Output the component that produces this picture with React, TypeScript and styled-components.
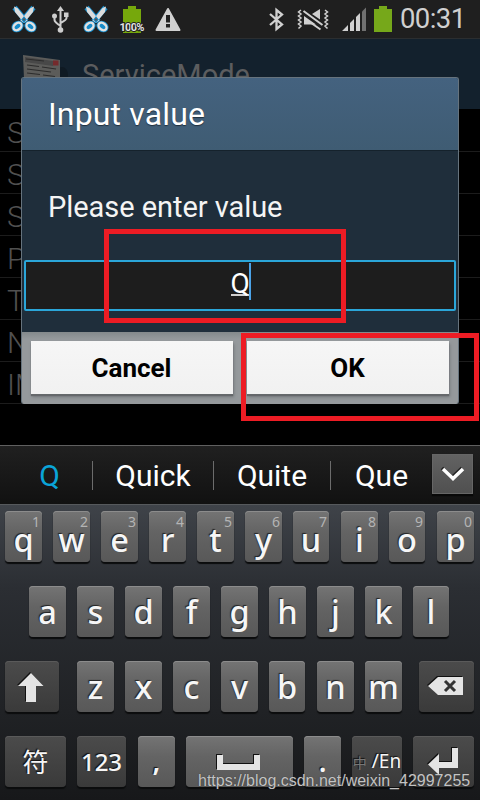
import React from "react";
import styled, { createGlobalStyle, css } from "styled-components";

const GlobalStyle = createGlobalStyle`
  * { box-sizing: border-box; }
  body { margin: 0; background: #000; font-family: Roboto, "Noto Sans CJK SC", sans-serif; }
`;

const Screen = styled.div`
  position: relative;
  width: 480px;
  height: 800px;
  overflow: hidden;
  display: flex;
  flex-direction: column;
  background: #000;
`;

const StatusBar = styled.header`
  height: 39px;
  flex: none;
  display: flex;
  justify-content: space-between;
  background: #1f1f1f;
  border-bottom: 1px solid #2b2e30;
`;

const StatusIcons = styled.svg`
  display: block;
  flex: none;
`;

const Clock = styled.time`
  width: 80px;
  font-size: 27.5px;
  line-height: 38px;
  letter-spacing: -0.6px;
  color: #d0d0d0;
  white-space: nowrap;
`;

const StatusRight = styled.div`
  display: flex;
`;

const AppHeader = styled.div`
  height: 70px;
  flex: none;
  display: flex;
  background: #13212d;
  padding: 14px 0 0 20px;
  color: #5c5d5f;
`;

const AppTitle = styled.h1`
  margin: 3px 0 0 12px;
  font-size: 29px;
  line-height: 38px;
  font-weight: 400;
`;

const List = styled.ul`
  margin: 0;
  padding: 0;
  list-style: none;
  height: 336px;
  flex: none;
`;

const ListRow = styled.li`
  height: 42px;
  padding-left: 7px;
  border-bottom: 1px solid #1c1c1c;
  color: #505050;
  font-size: 30px;
  line-height: 46px;
  font-weight: 300;

  &:first-child {
    height: 43px;
    line-height: 47px;
  }
`;

const Dialog = styled.section`
  position: absolute;
  left: 21px;
  top: 77px;
  width: 438px;
  height: 327px;
  display: flex;
  flex-direction: column;
  border-radius: 3px;
  overflow: hidden;
  background: #1f2e3b;
  border: 1px solid #66737d;
  border-bottom: 0;
`;

const DialogTitle = styled.h2`
  margin: 0;
  height: 73px;
  padding-left: 26px;
  background: linear-gradient(#44627f, #3f5c73);
  border-bottom: 1px solid #15222c;
  color: #fff;
  font-size: 32px;
  line-height: 72px;
  letter-spacing: 0.15px;
  font-weight: 400;
  text-shadow: 0 1px 1px #20303e;
`;

const DialogBody = styled.div`
  height: 181px;
  padding: 36px 2px 0;
`;

const Prompt = styled.p`
  margin: 0 0 32px 24px;
  font-size: 29px;
  line-height: 41px;
  letter-spacing: -0.05px;
  color: #f4f4f4;
`;

const Field = styled.div`
  height: 51px;
  display: flex;
  justify-content: center;
  align-items: flex-start;
  padding-top: 1px;
  border: 2px solid #2ba6d9;
  border-radius: 2px;
  background: #1d1d1d;
  color: #fff;
  font-size: 28px;
  line-height: 41px;
`;

const Composing = styled.span`
  height: 33px;
  width: 18px;
  margin-left: 1px;
  border-bottom: 2px solid #d0d0d0;
`;

const Caret = styled.i`
  width: 2px;
  height: 37px;
  background: #4ba3e8;
`;

const DialogActions = styled.div`
  height: 72px;
  display: flex;
  gap: 14px;
  padding: 9px 9px 0;
  background: linear-gradient(#83898b, #95999c 7px);
`;

const DialogButton = styled.button`
  flex: 1;
  height: 53px;
  border: 0;
  padding: 0 1px 0 0;
  background: linear-gradient(#f6f6f6, #f1f1f1);
  box-shadow: 0 2px 1px #65686b, 1px 3px 3px #75797c;
  color: #000;
  font-family: inherit;
  font-size: 26px;
  font-weight: 700;
`;

const Highlight = styled.div<{ $x: number; $y: number; $w: number; $h: number }>`
  position: absolute;
  left: ${(p) => p.$x}px;
  top: ${(p) => p.$y}px;
  width: ${(p) => p.$w}px;
  height: ${(p) => p.$h}px;
  border: 5px solid #ed1c24;
`;

const Suggestions = styled.div`
  height: 59px;
  flex: none;
  display: flex;
  align-items: center;
  background: linear-gradient(#202020, #111);
  border-top: 1px solid #606060;
  color: #fff;
`;

const Suggestion = styled.span<{ $w: number; $active?: boolean; $last?: boolean }>`
  width: ${(p) => p.$w}px;
  height: 29px;
  flex: none;
  text-align: center;
  font-size: 30px;
  line-height: 30px;
  ${(p) => !p.$last && css`border-right: 1px solid #6c6c6c;`}
  ${(p) => p.$active && css`color: #0aa4d8; padding-left: 7px;`}
`;

const CollapseButton = styled.button`
  width: 41px;
  height: 40px;
  padding: 0;
  margin-bottom: 3px;
  border: 1px solid #666;
  background: linear-gradient(#626262, #505050);
  box-shadow: 0 2px 1px #080808;
`;

const Keyboard = styled.div`
  flex: 1;
  display: flex;
  flex-direction: column;
  gap: 24px;
  padding-top: 6px;
  background: linear-gradient(#3f4349, #2b2e33 28%, #202225 70%, #17181a);
  border-top: 1px solid #56595c;
`;

const KeyRow = styled.div<{ $start: number }>`
  display: flex;
  height: 51px;
  flex: none;
  padding-left: ${(p) => p.$start}px;
`;

const KeyCap = styled.button<{ $w: number; $gap: number; $dark?: boolean }>`
  position: relative;
  width: ${(p) => p.$w}px;
  margin: 0 ${(p) => p.$gap}px 0 0;
  height: 51px;
  flex: none;
  display: flex;
  justify-content: center;
  padding: 0;
  border: 0;
  border-radius: 4px;
  background: ${(p) =>
    p.$dark ? "linear-gradient(#4b4b4b, #3a3a3a)" : "linear-gradient(#747474, #646464 40%, #585858)"};
  box-shadow: inset 0 1px 0 ${(p) => (p.$dark ? "#5a5a5a" : "#8c8c8c")}, 0 2px 1px #0b0c0d;
  color: #f6f6f6;
  font-family: "Noto Sans", "Noto Sans CJK SC", sans-serif;
  white-space: nowrap;
`;

const Letter = styled.span<{ $line?: number }>`
  font-size: 32.5px;
  line-height: ${(p) => p.$line ?? 52}px;
  font-weight: 500;
  text-shadow: -1px -1px 1px #222;
`;

const Hint = styled.sup`
  position: absolute;
  right: 2px;
  top: 3px;
  font-size: 14px;
  line-height: 16px;
  color: #b4b4b4;
`;

const KeyLabel = styled.span<{ $size: number; $weight?: number; $line?: number }>`
  font-size: ${(p) => p.$size}px;
  font-weight: ${(p) => p.$weight ?? 400};
  line-height: ${(p) => p.$line ?? 52}px;
  text-shadow: -1px -1px 1px #111;
`;

const Muted = styled.span`
  font-size: 14px;
  color: #777;
`;

const KeyIcon = styled.svg`
  display: block;
  width: 100%;
  height: 51px;
`;

const Watermark = styled.div`
  position: absolute;
  left: 198px;
  top: 771px;
  font-family: "Liberation Sans", Arial, sans-serif;
  font-size: 16px;
  line-height: 20px;
  color: rgba(222, 222, 222, 0.85);
  white-space: nowrap;
  text-shadow: 0 0 1px #333;
`;

const Scissors = ({ x }: { x: number }) => (
  <g transform={`translate(${x} 5.5)`}>
    <path d="M3.500 2L15.500 16M22.500 2L10.500 16" stroke="#168bc9" strokeWidth="5.500" />
    <g fill="#168bc9" stroke="#168bc9" strokeWidth="4.500">
      <ellipse cx="6.500" cy="21" rx="4.200" ry="3.200" transform="rotate(-38 6.500 21)" />
      <ellipse cx="19.500" cy="21" rx="4.200" ry="3.200" transform="rotate(38 19.500 21)" />
    </g>
    <g fill="#168bc9" stroke="#e2e2e2" strokeWidth="2.400">
      <ellipse cx="6.500" cy="21" rx="4.400" ry="3.200" transform="rotate(-38 6.500 21)" />
      <ellipse cx="19.500" cy="21" rx="4.400" ry="3.200" transform="rotate(38 19.500 21)" />
    </g>
    <path d="M3 1L6.500 2.500 16.500 15 13 17.500 4 6.500ZM23 1L19.500 2.500 9.500 15 13 17.500 22 6.500Z" fill="#dcdcdc" />
    <circle cx="13" cy="14" r="1.200" fill="#555" />
  </g>
);

const LeftIcons = () => (
  <StatusIcons width="200" height="38">
    <Scissors x={11} />
    <g stroke="#cdcdcd" strokeWidth="2" fill="none">
      <path d="M60.500 10V30M54.500 17v3q0 2 6 6M66.500 15v3q0 2-6 5" />
      <path d="M60.500 6l3.500 5h-7z" fill="#cdcdcd" stroke="none" />
      <rect x="64" y="12.500" width="4.500" height="4.500" fill="#cdcdcd" stroke="none" />
      <circle cx="54.500" cy="16" r="2.500" fill="#cdcdcd" stroke="none" />
      <circle cx="60.500" cy="30" r="2.800" fill="#cdcdcd" stroke="none" />
    </g>
    <Scissors x={83} />
    <path d="M123 9h5V6h8v3h5v24h-18z" fill="#76a80c" />
    <text x="132" y="31" textAnchor="middle" fontFamily="Roboto" fontSize="11" fontWeight="700" fill="#e4e4e4" stroke="#1f1f1f" strokeWidth="2" paintOrder="stroke" textLength="25">100%</text>
    <path d="M168 9L179.500 30H156.500Z" fill="#d0d0d0" stroke="#d0d0d0" strokeWidth="2" strokeLinejoin="round" />
    <path d="M166 15h4v7.500h-4zM166 24h4v3.500h-4z" fill="#222" />
  </StatusIcons>
);

const RightIcons = () => (
  <StatusIcons width="136" height="38" viewBox="264 0 136 38">
    <path d="M270 14L282 24.500 276.500 29V10L282 14.500 270 25" fill="none" stroke="#d0d0d0" strokeWidth="2.300" />
    <g fill="none" stroke="#d0d0d0" strokeWidth="1.500">
      <path d="M301 10l-2.500 2 2.500 2-2.500 2 2.500 2-2.500 2 2.500 2-2.500 2 2.500 2-2.500 2.500M325 10l2.500 2-2.500 2 2.500 2-2.500 2 2.500 2-2.500 2 2.500 2-2.500 2 2.500 2.500" />
    </g>
    <path d="M312 14L320 9V19.500ZM304 16L316 24.500H304Z" fill="#d0d0d0" />
    <path d="M303.500 11L322.500 25M309 21.500L320.500 29.500" stroke="#d0d0d0" strokeWidth="2" />
    <path d="M342 31L348 25V31ZM350 23L354 19V31H350ZM356 17L360 13V31H356Z" fill="#d0d0d0" />
    <path d="M362 11.500L366 7.500V31H362Z" fill="#707070" />
    <path d="M374 9h5V6h8v3h5v23h-18z" fill="#76a81a" />
  </StatusIcons>
);

const AppIcon = () => (
  <svg width="50" height="50">
    <ellipse cx="42" cy="22" rx="6" ry="8" fill="#0f1a23" />
    <path d="M3 2L40 7V50H5Z" fill="#5c5c5a" />
    <path d="M5 4L33 8V13L5 9Z" fill="#484848" />
    <rect x="33" y="7.500" width="5.500" height="5" fill="#752a2c" />
    <path d="M6 6l18 2M7 12l12 1.500m3 .5l14 2M7 16l24 3M7 20l13 1.500m3 .5l12 1.500" stroke="#2c2c2c" strokeWidth="1.200" />
  </svg>
);

const letters = (text: string) => text.split("");

export default function App() {
  return (
    <Screen>
      <GlobalStyle />
      <StatusBar>
        <LeftIcons />
        <StatusRight>
          <RightIcons />
          <Clock>00:31</Clock>
        </StatusRight>
      </StatusBar>
      <AppHeader>
        <AppIcon />
        <AppTitle>ServiceMode</AppTitle>
      </AppHeader>
      <List>
        {["S", "S", "S", "P", "T", "N", "IM"].map((label, i) => (
          <ListRow key={i}>{label}</ListRow>
        ))}
      </List>
      <Suggestions>
        <Suggestion $w={93} $active>Q</Suggestion>
        <Suggestion $w={121}>Quick</Suggestion>
        <Suggestion $w={117}>Quite</Suggestion>
        <Suggestion $w={101} $last>Que</Suggestion>
        <CollapseButton aria-label="Hide suggestions">
          <svg width="39" height="38">
            <path d="M10 14L20 23.500L30 14" fill="none" stroke="#222" strokeWidth="3.500" transform="translate(-1 -1)" />
            <path d="M10 14L20 23.500L30 14" fill="none" stroke="#fff" strokeWidth="3.500" />
          </svg>
        </CollapseButton>
      </Suggestions>
      <Keyboard>
        <KeyRow $start={5}>
          {letters("qwertyuiop").map((c, i) => (
            <KeyCap key={c} $w={c === "u" || c === "o" ? 36 : 37} $gap={c === "u" || c === "o" ? 12 : 11}>
              <Hint>{(i + 1) % 10}</Hint>
              <Letter $line={58}>{c}</Letter>
            </KeyCap>
          ))}
        </KeyRow>
        <KeyRow $start={29}>
          {letters("asdfghjkl").map((c) => (
            <KeyCap key={c} $w={c === "l" ? 36 : 37} $gap={11}>
              <Letter>{c}</Letter>
            </KeyCap>
          ))}
        </KeyRow>
        <KeyRow $start={5}>
          <KeyCap $w={54} $gap={18} $dark aria-label="Shift">
            <KeyIcon viewBox="0 0 54 51">
              <path d="M26 12L38.500 25H31V41H21V25H13Z" fill="#111" transform="translate(-1 -1)" />
              <path d="M26 12L38.500 25H31V41H21V25H13Z" fill="#e4e4e4" />
            </KeyIcon>
          </KeyCap>
          {letters("zxcvbnm").map((c) => (
            <KeyCap key={c} $w={c === "b" ? 36 : 37} $gap={c === "m" ? 17 : c === "b" ? 12 : 11}>
              <Letter>{c}</Letter>
            </KeyCap>
          ))}
          <KeyCap $w={55} $gap={0} $dark aria-label="Delete">
            <KeyIcon viewBox="0 0 55 51">
              <path d="M9 25L19 16H44V34H19Z" fill="#111" transform="translate(-1 -1)" />
              <path d="M9 25L19 16H44V34H19Z" fill="#e4e4e4" />
              <path d="M26 20L36 30M36 20L26 30" stroke="#333" strokeWidth="3" />
            </KeyIcon>
          </KeyCap>
        </KeyRow>
        <KeyRow $start={5}>
          <KeyCap $w={61} $gap={11} $dark><KeyLabel $size={26}>符</KeyLabel></KeyCap>
          <KeyCap $w={49} $gap={12} $dark><KeyLabel $size={24} $weight={500} $line={51}>123</KeyLabel></KeyCap>
          <KeyCap $w={37} $gap={11}><KeyLabel $size={28} $weight={600} $line={49}>,</KeyLabel></KeyCap>
          <KeyCap $w={107} $gap={11} aria-label="Space">
            <KeyIcon viewBox="0 0 107 51">
              <path d="M31 19h6v9h31v-9h6v15H31z" fill="#111" transform="translate(-1 -1)" />
              <path d="M31 19h6v9h31v-9h6v15H31z" fill="#e4e4e4" />
            </KeyIcon>
          </KeyCap>
          <KeyCap $w={37} $gap={11}><KeyLabel $size={28} $weight={600} $line={51}>.</KeyLabel></KeyCap>
          <KeyCap $w={50} $gap={11} $dark>
            <KeyLabel $size={19} $line={50}><Muted>中</Muted> /En</KeyLabel>
          </KeyCap>
          <KeyCap $w={61} $gap={0} $dark aria-label="Enter">
            <KeyIcon viewBox="0 0 61 51">
              <path d="M39 12h6v20H26v7L15 28.500 26 18v8h13z" fill="#111" transform="translate(-1 -1)" />
              <path d="M39 12h6v20H26v7L15 28.500 26 18v8h13z" fill="#e4e4e4" />
            </KeyIcon>
          </KeyCap>
        </KeyRow>
      </Keyboard>
      <Dialog>
        <DialogTitle>Input value</DialogTitle>
        <DialogBody>
          <Prompt>Please enter value</Prompt>
          <Field>
            <Composing>Q</Composing>
            <Caret />
          </Field>
        </DialogBody>
        <DialogActions>
          <DialogButton>Cancel</DialogButton>
          <DialogButton>OK</DialogButton>
        </DialogActions>
      </Dialog>
      <Highlight $x={104} $y={229} $w={242} $h={94} />
      <Highlight $x={241} $y={333} $w={238} $h={88} />
      <Watermark>https://blog.csdn.net/weixin_42997255</Watermark>
    </Screen>
  );
}
